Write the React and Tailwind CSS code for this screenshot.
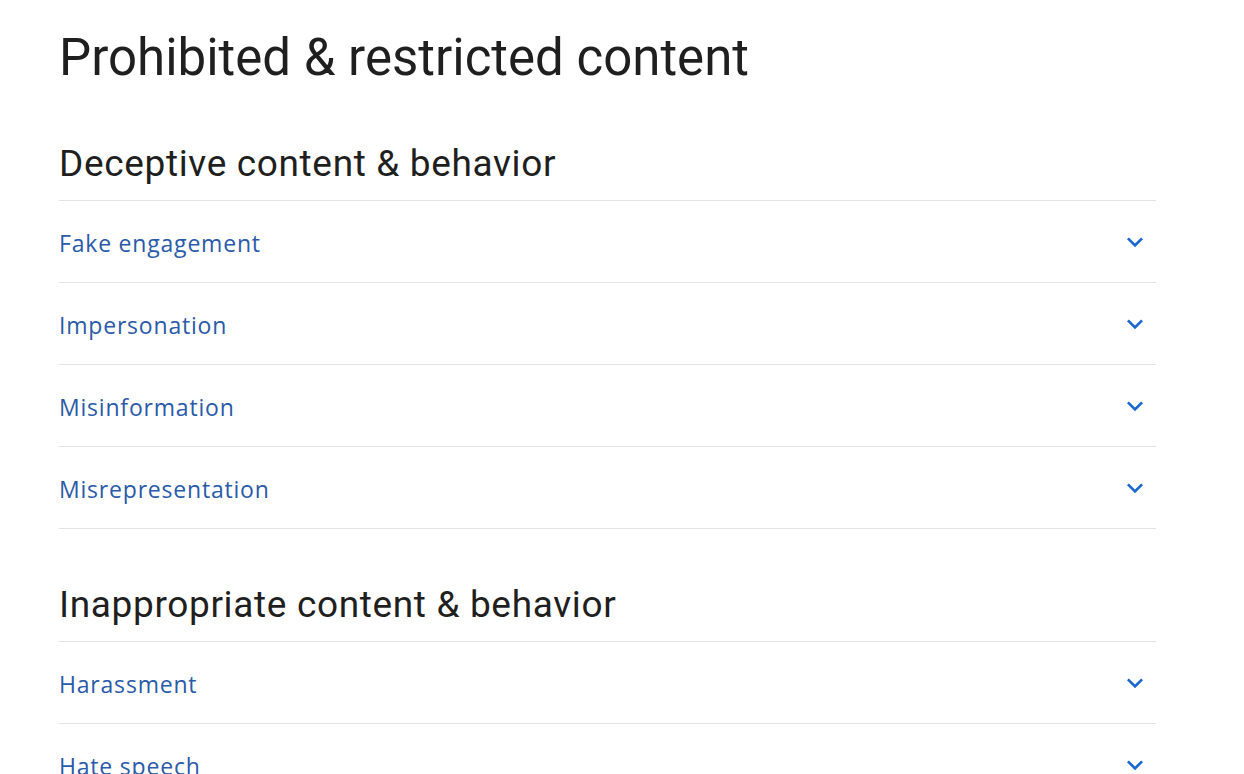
const sections = [
  {
    title: "Deceptive content & behavior",
    items: ["Fake engagement", "Impersonation", "Misinformation", "Misrepresentation"],
  },
  {
    title: "Inappropriate content & behavior",
    items: ["Harassment", "Hate speech", "Sexual content"],
  },
];

const Chevron = () => (
  <svg width="32" height="32" viewBox="0 0 24 24" className="text-[#1a67d2]">
    <path d="M7.4 8.6 12 13.2l4.6-4.6L18 10l-6 6-6-6z" fill="currentColor" />
  </svg>
);

export default function App() {
  return (
    <div className="h-[774px] overflow-hidden bg-white font-['Roboto',sans-serif]">
      <div className="w-[1156px] pl-[59px]">
        <h1 className="pt-[28px] text-[51px] leading-[60px] text-[#1f1f1f]">
          Prohibited &amp; restricted content
        </h1>
        {sections.map((s) => (
          <section key={s.title} className="mt-[54px]">
            <h2 className="text-[37px] leading-[44px] tracking-[0.65px] text-[#1f1f1f] pb-[14px] border-b border-[#e3e3e3]">
              {s.title}
            </h2>
            <ul>
              {s.items.map((item) => (
                <li
                  key={item}
                  className="flex h-[82px] items-center justify-between border-b border-[#e3e3e3] pr-[5px]"
                >
                  <span className="pt-[3px] font-['Open_Sans',sans-serif] text-[23px] tracking-[0.8px] text-[#2a5aa8]">
                    {item}
                  </span>
                  <Chevron />
                </li>
              ))}
            </ul>
          </section>
        ))}
      </div>
    </div>
  );
}
